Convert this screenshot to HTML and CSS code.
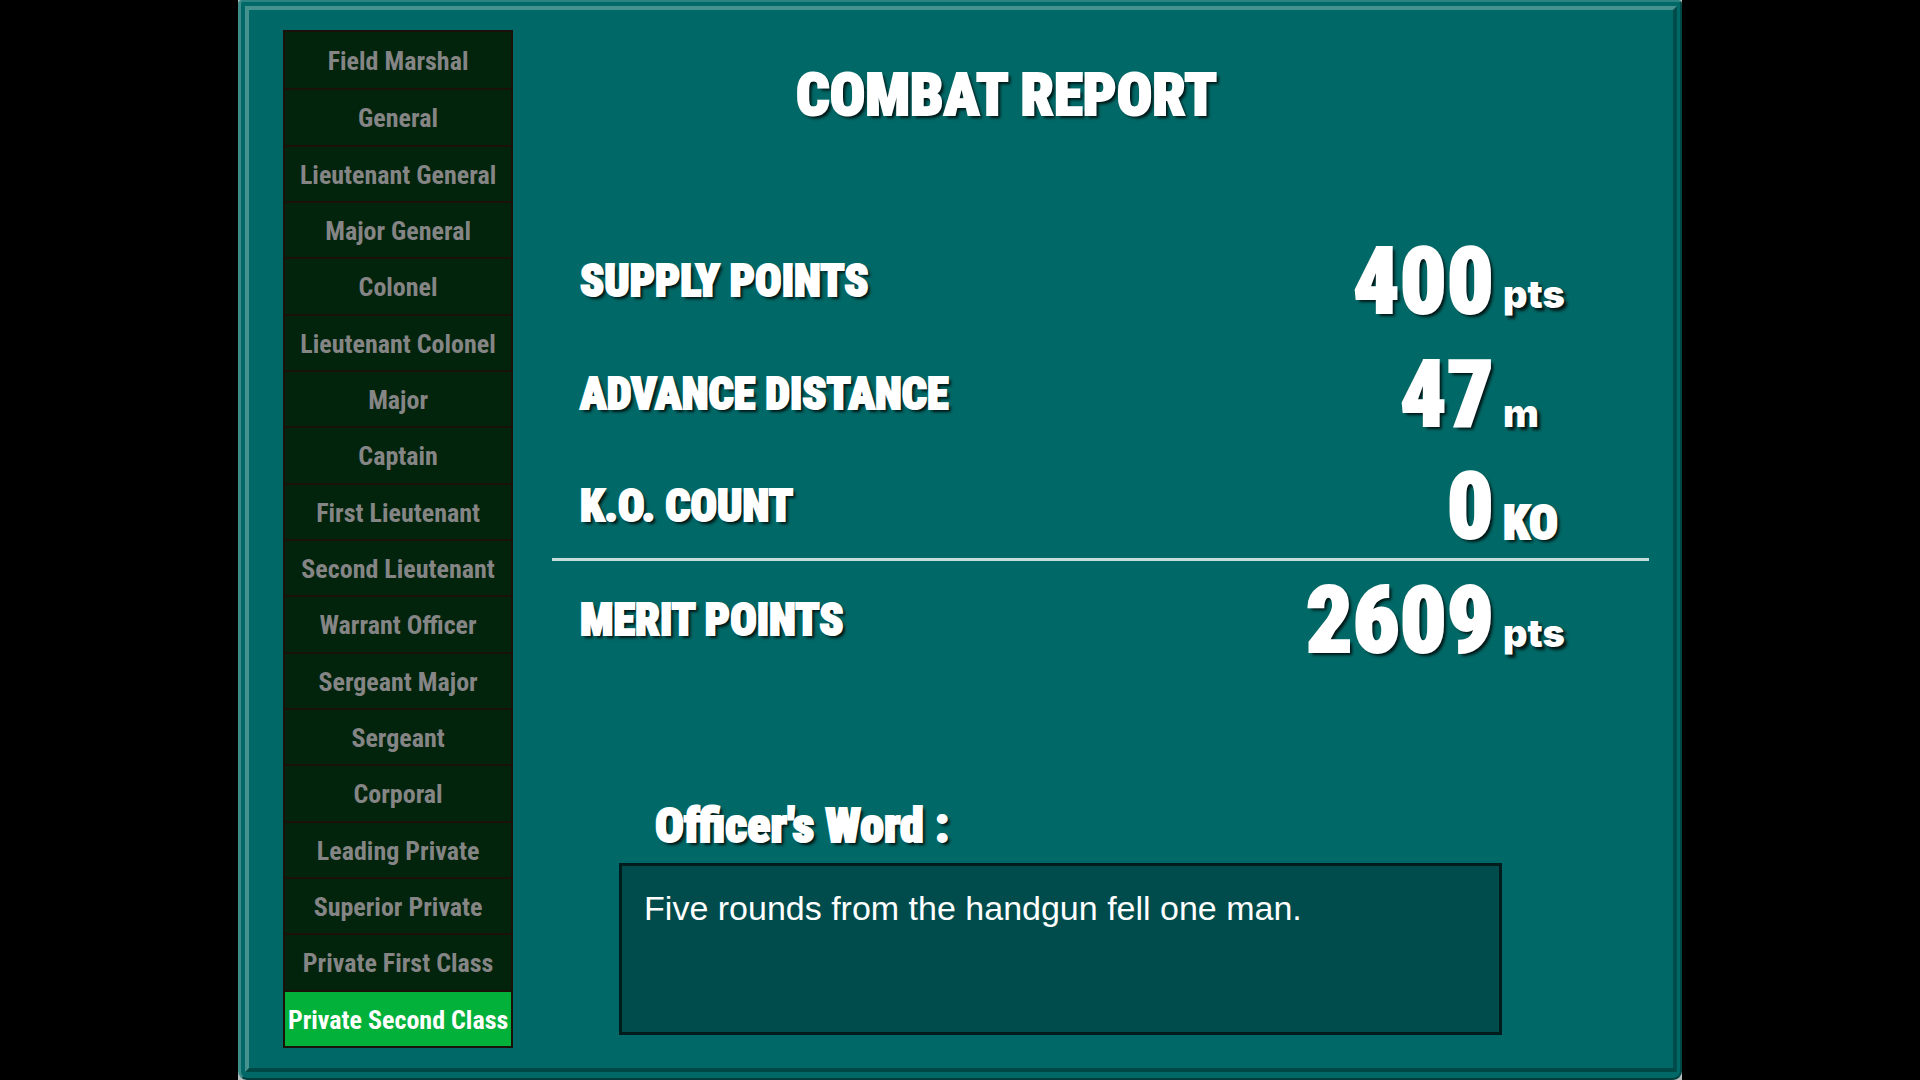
FILE: index.html
```
<!DOCTYPE html>
<html lang="en">
<head>
    <meta charset="UTF-8">
    <meta name="viewport" content="width=device-width, initial-scale=1.0">
    <title>Combat Report</title>
    <link rel="stylesheet" href="styles.css">
</head>
<body>
    <div class="backdrop">
        <div class="frame">
            <div class="panel">
                <ol class="ranks">
                    <li>Field Marshal</li>
                    <li>General</li>
                    <li>Lieutenant General</li>
                    <li>Major General</li>
                    <li>Colonel</li>
                    <li>Lieutenant Colonel</li>
                    <li>Major</li>
                    <li>Captain</li>
                    <li>First Lieutenant</li>
                    <li>Second Lieutenant</li>
                    <li>Warrant Officer</li>
                    <li>Sergeant Major</li>
                    <li>Sergeant</li>
                    <li>Corporal</li>
                    <li>Leading Private</li>
                    <li>Superior Private</li>
                    <li>Private First Class</li>
                    <li class="current" aria-current="true">Private Second Class</li>
                </ol>

                <main class="report">
                    <h1>COMBAT REPORT</h1>

                    <table class="stats">
                        <tr>
                            <th scope="row">SUPPLY POINTS</th>
                            <td class="value">400</td>
                            <td class="unit pts">pts</td>
                        </tr>
                        <tr>
                            <th scope="row">ADVANCE DISTANCE</th>
                            <td class="value">47</td>
                            <td class="unit">m</td>
                        </tr>
                        <tr>
                            <th scope="row">K.O. COUNT</th>
                            <td class="value">0</td>
                            <td class="unit ko">KO</td>
                        </tr>
                        <tr class="total">
                            <th scope="row">MERIT POINTS</th>
                            <td class="value">2609</td>
                            <td class="unit pts">pts</td>
                        </tr>
                    </table>

                    <section class="officer">
                        <h2>Officer's Word :</h2>
                        <p>Five rounds from the handgun fell one man.</p>
                    </section>
                </main>
            </div>
        </div>
    </div>
</body>
</html>
```
FILE: styles.css
```
* {
    box-sizing: border-box;
}
body {
    margin: 0;
    background-color: #000;
    color: #fff;
    font-family: "Roboto Condensed", Roboto, sans-serif;
}
.backdrop {
    width: 75.2%;
    margin: 0 auto;
    background-color: #b4bcbc;
}
/* outer bevel */
.frame {
    min-height: 100vh;
    display: flex;
    padding: 4px 3px 6px 4px;
    background-color: #006866;
    border-style: solid;
    border-width: 2px 2px 2px 3px;
    border-color: #2b8482 #004846 #003c3c #3c8c8a;
    border-radius: 4px 4px 9px 9px;
}
/* inner bevel */
.panel {
    flex: 1;
    display: flex;
    padding: 20px 24px 20px 34px;
    border: 4px solid;
    border-color: #46928f #004c4a #004846 #46928f;
    background-color: #006866;
}
.ranks {
    display: grid;
    grid-template-columns: 100%;
    grid-auto-rows: 1fr;
    width: 230px;
    flex-shrink: 0;
    margin: 0;
    padding: 0;
    list-style: none;
    border: 2px solid #1a1208;
    background-color: #02230c;
    color: #858585;
    font-size: 26px;
    font-weight: bold;
    line-height: 32px;
}
.ranks li {
    display: flex;
    justify-content: center;
    align-items: center;
    padding-top: 2px;
    white-space: nowrap;
}
.ranks li + li {
    border-top: 2px solid #1a1208;
}
.ranks .current {
    background-color: #02b13a;
    color: #fff;
}
.report {
    flex: 1;
    padding: 35px 0 0 39px;
}
h1, h2, th, .value, .unit {
    text-shadow: 3px 3px 3px rgba(0, 0, 0, 0.8);
}
h1, h2, th, .value, .ko {
    font-weight: 900;
    -webkit-text-stroke: 2px #fff;
}
h1 {
    margin: 0 188px 95px 0;
    font-size: 59px;
    line-height: 60px;
    text-align: center;
}
.stats {
    width: 100%;
    border-collapse: collapse;
}
.stats tr {
    height: 113px;
}
.stats th,
.stats td {
    padding: 8px 0 0;
    vertical-align: middle;
}
.stats th {
    padding-left: 28px;
    font-size: 44px;
    text-align: left;
}
.stats .value {
    padding-top: 10px;
    font-size: 92px;
    line-height: 100px;
    text-align: right;
}
.stats .unit {
    width: 155px;
    padding: 0 0 13px 9px;
    font-family: Inter, "Liberation Sans", sans-serif;
    font-size: 38px;
    font-weight: 900;
    line-height: 40px;
    vertical-align: bottom;
}
.stats .pts {
    padding-bottom: 19px;
}
.stats .ko {
    padding-bottom: 15px;
    font-family: "Roboto Condensed", Roboto, sans-serif;
    font-size: 48px;
}
.total {
    border-top: 3px solid #c4dede;
}
.officer {
    padding: 130px 147px 0 67px;
}
h2 {
    margin: 0 0 13px;
    padding-left: 36px;
    font-size: 48px;
    line-height: 48px;
}
.officer p {
    min-height: 172px;
    margin: 0;
    padding: 22px;
    border: 3px solid #001c1c;
    background-color: #004c4c;
    font-family: "Liberation Sans", Arial, sans-serif;
    font-size: 34px;
    line-height: 40px;
}
```
